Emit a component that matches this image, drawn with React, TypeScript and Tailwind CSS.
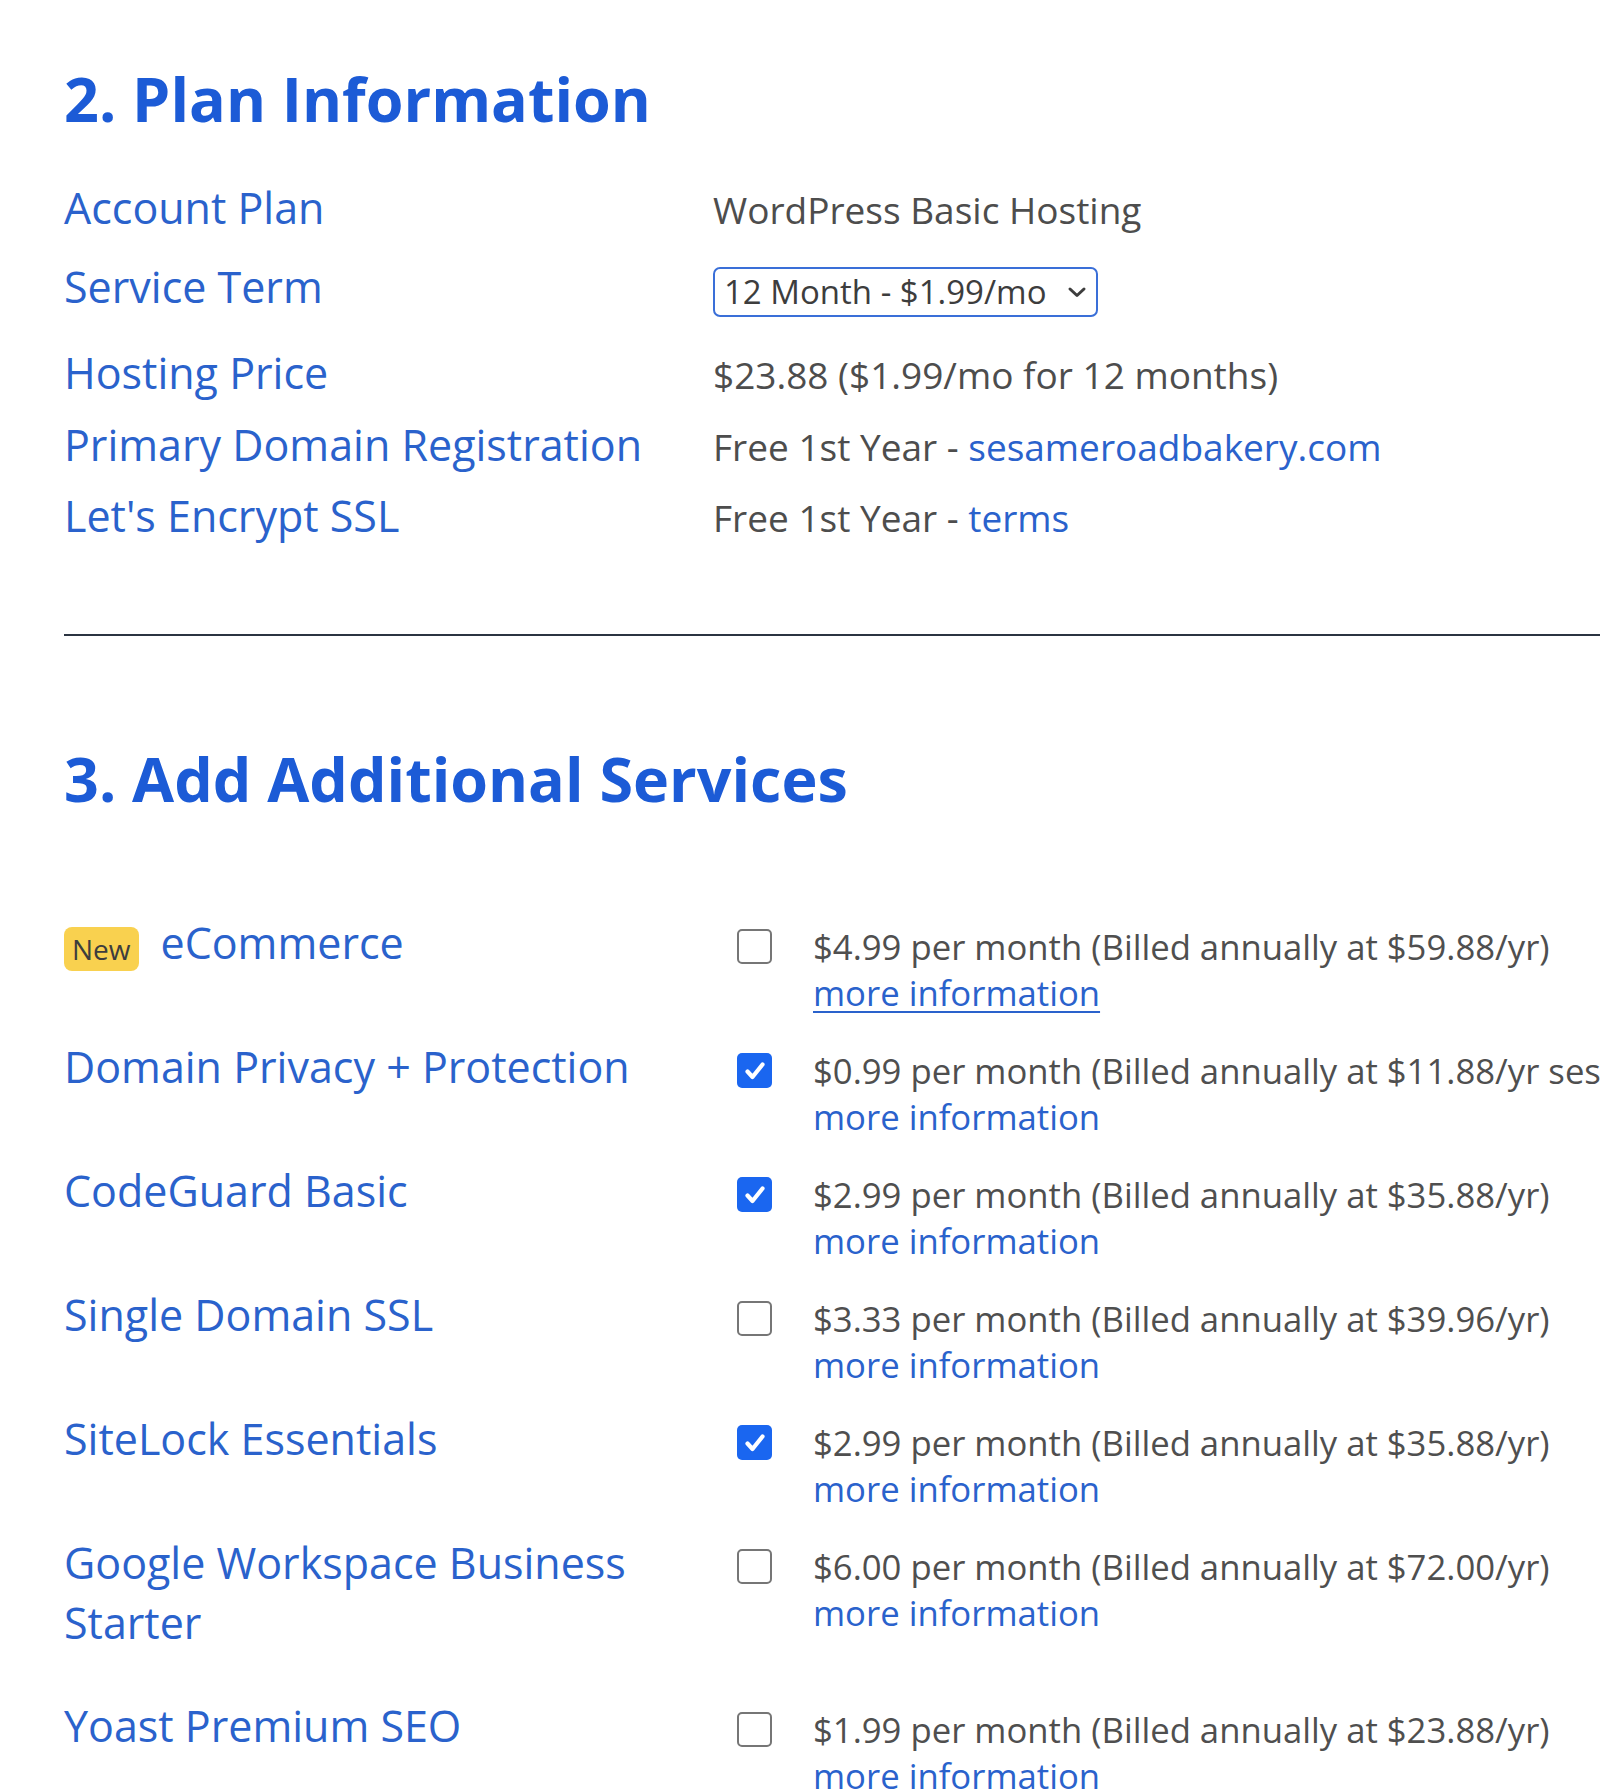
type Service = {
  name: string;
  price: string;
  checked: boolean;
  isNew?: boolean;
  underline?: boolean;
  tall?: boolean;
};

const services: Service[] = [
  { name: "eCommerce", price: "$4.99 per month (Billed annually at $59.88/yr)", checked: false, isNew: true, underline: true },
  { name: "Domain Privacy + Protection", price: "$0.99 per month (Billed annually at $11.88/yr sesameroadbakery.com)", checked: true },
  { name: "CodeGuard Basic", price: "$2.99 per month (Billed annually at $35.88/yr)", checked: true },
  { name: "Single Domain SSL", price: "$3.33 per month (Billed annually at $39.96/yr)", checked: false },
  { name: "SiteLock Essentials", price: "$2.99 per month (Billed annually at $35.88/yr)", checked: true },
  { name: "Google Workspace Business Starter", price: "$6.00 per month (Billed annually at $72.00/yr)", checked: false, tall: true },
  { name: "Yoast Premium SEO", price: "$1.99 per month (Billed annually at $23.88/yr)", checked: false },
];

function Checkbox({ checked }: { checked: boolean }) {
  if (checked) {
    return (
      <div className="mt-[16px] flex h-[35px] w-[35px] shrink-0 items-center justify-center rounded-[5px] bg-[#1a66f0]">
        <svg width="24" height="24" viewBox="0 0 24 24" fill="none">
          <polyline points="4.5,12.5 9.5,18 19.5,5.5" stroke="white" strokeWidth="4.2" strokeLinecap="round" strokeLinejoin="round" />
        </svg>
      </div>
    );
  }
  return <div className="mt-[16px] h-[35px] w-[35px] shrink-0 rounded-[5px] border-2 border-[#767676] bg-white" />;
}

function ServiceRow({ s }: { s: Service }) {
  return (
    <div className={`flex items-start ${s.tall ? "h-[163px]" : "h-[124px]"}`}>
      <div className="w-[673px] shrink-0 pr-[20px] text-[43px] leading-[60px] text-[#2a62cc]">
        {s.isNew ? (
          <div className="flex items-start">
            <span className="mt-[14px] rounded-[8px] bg-[#f9d14f] px-[8px] text-[28px] leading-[44px] text-[#3d3d3d]">New</span>
            <span className="ml-[22px]">{s.name}</span>
          </div>
        ) : (
          s.name
        )}
      </div>
      <Checkbox checked={s.checked} />
      <div className="ml-[41px] mt-[11px] whitespace-nowrap text-[34.7px] leading-[46px]">
        <div className="text-[#4f4f4f]">{s.price}</div>
        <a
          className={`text-[#2a62cc] ${s.underline ? "underline decoration-[2px] underline-offset-[5px]" : "no-underline"}`}
        >
          more information
        </a>
      </div>
    </div>
  );
}

export default function App() {
  return (
    <div className="h-[1790px] w-[1600px] overflow-hidden bg-white font-['Open_Sans',sans-serif]">
      <div className="pl-[64px] pt-[68px]">
        {/* plan information */}
        <h2 className="text-[61px] font-bold leading-[62px] text-[#1c5bd6]">2. Plan Information</h2>

        <div className="mt-[42px] flex flex-col">
          <div className="flex h-[71px] items-baseline leading-[71px]">
            <div className="w-[649px] shrink-0 text-[43px] text-[#2a62cc]">Account Plan</div>
            <div className="text-[37px] text-[#4d4d4d]">WordPress Basic Hosting</div>
          </div>

          <div className="mt-[8px] flex h-[71px] items-start">
            <div className="w-[649px] shrink-0 text-[43px] leading-[71px] text-[#2a62cc]">Service Term</div>
            <div className="mt-[16px] flex h-[50px] w-[385px] items-center justify-between whitespace-nowrap rounded-[7px] border-2 border-[#3a6fd8] pl-[9px] pr-[9px] text-[33px] leading-[46px] text-[#3d3d3d]">
              <span>12 Month - $1.99/mo</span>
              <svg width="20" height="12" viewBox="0 0 20 12" fill="none">
                <polyline points="3,3 10,9.5 17,3" stroke="#3d3d3d" strokeWidth="3" strokeLinecap="round" strokeLinejoin="round" />
              </svg>
            </div>
          </div>

          <div className="mt-[15px] flex h-[71px] items-baseline leading-[71px]">
            <div className="w-[649px] shrink-0 text-[43px] text-[#2a62cc]">Hosting Price</div>
            <div className="text-[37px] text-[#4d4d4d]">$23.88 ($1.99/mo for 12 months)</div>
          </div>

          <div className="mt-[1px] flex h-[71px] items-baseline leading-[71px]">
            <div className="w-[649px] shrink-0 text-[43px] text-[#2a62cc]">Primary Domain Registration</div>
            <div className="text-[37px] text-[#4d4d4d]">
              Free 1st Year - <a className="text-[#2a62cc]">sesameroadbakery.com</a>
            </div>
          </div>

          <div className="flex h-[71px] items-baseline leading-[71px]">
            <div className="w-[649px] shrink-0 text-[43px] text-[#2a62cc]">Let's Encrypt SSL</div>
            <div className="text-[37px] text-[#4d4d4d]">
              Free 1st Year - <a className="text-[#2a62cc]">terms</a>
            </div>
          </div>
        </div>

        <div className="mt-[83px] h-[2px] bg-[#2b3441]" />

        {/* additional services */}
        <h2 className="mt-[112px] text-[61px] font-bold leading-[62px] text-[#1c5bd6]">3. Add Additional Services</h2>

        <div className="mt-[103px] flex flex-col">
          {services.map((s) => (
            <ServiceRow key={s.name} s={s} />
          ))}
        </div>
      </div>
    </div>
  );
}
